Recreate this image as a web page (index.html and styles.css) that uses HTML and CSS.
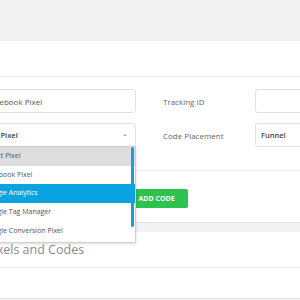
FILE: index.html
```html
<!DOCTYPE html>
<html lang="en">
<head>
  <meta charset="UTF-8">
  <title>Pixels and Codes</title>
  <link rel="stylesheet" href="styles.css">
</head>
<body>
  <div class="page">
    <div class="card">
      <div class="card-head"></div>
      <div class="card-body">
        <input type="text" class="field" value="Facebook Pixel">
        <label class="label">Tracking ID</label>
        <input type="text" class="field">

        <div class="select-wrap">
          <div class="field select">Select Pixel <span class="caret"></span></div>
          <div class="dropdown">
            <div class="option current">Select Pixel</div>
            <div class="option">Facebook Pixel</div>
            <div class="option hover">Google Analytics</div>
            <div class="option">Google Tag Manager</div>
            <div class="option">Google Conversion Pixel</div>
            <div class="scrollbar"></div>
          </div>
        </div>
        <label class="label">Code Placement</label>
        <div class="field select">Funnel</div>
      </div>
      <div class="card-foot">
        <button class="btn-add">ADD CODE</button>
      </div>
    </div>

    <div class="card second">
      <div class="card-head">
        <h3 class="title">Pixels and Codes</h3>
      </div>
      <div class="card-body empty"></div>
    </div>
  </div>
</body>
</html>
```

FILE: styles.css
```css
body {
  margin: 0;
  background: #f1f2f4;
  font-family: "Open Sans", sans-serif;
  overflow: hidden;
}
.page {
  padding-top: 41px;
  margin-left: -20px;
  width: 480px;
}
.card {
  background: #fff;
  border-bottom: 1px solid #e2e3e5;
}
.card.second {
  margin-top: 9px;
}
.card-head {
  height: 35px;
  border-bottom: 1px solid #eeeeee;
  display: flex;
  align-items: center;
}
.title {
  margin: 0 0 0 6px;
  font-size: 12.5px;
  font-weight: 400;
  color: #8a8a8a;
}
.card-body {
  display: grid;
  grid-template-columns: 155px 119px 160px;
  row-gap: 10px;
  align-items: center;
  padding: 12px 0 23px 1px;
}
.card-body.empty {
  height: 30px;
  padding: 0;
}
.field {
  box-sizing: border-box;
  height: 24px;
  border: 1px solid #e1e1e1;
  border-radius: 3px;
  padding: 0 5px;
  font-family: "Open Sans", sans-serif;
  font-size: 8px;
  color: #555;
  background: #fff;
  outline: none;
}
.select {
  display: flex;
  align-items: center;
  font-size: 7.5px;
  font-weight: 600;
  color: #444;
}
.label {
  padding-left: 27px;
  font-size: 8px;
  color: #666;
}
.select-wrap {
  position: relative;
  margin-left: -10px;
}
.caret {
  margin-left: auto;
  margin-right: 3px;
  border-left: 2px solid transparent;
  border-right: 2px solid transparent;
  border-bottom: 2px solid #aaa;
}
.dropdown {
  position: absolute;
  top: 23px;
  left: 0;
  width: 100%;
  box-sizing: border-box;
  background: #fff;
  border: 1px solid #cfcfcf;
  box-shadow: 0 1px 3px rgba(0, 0, 0, 0.15);
  padding-bottom: 2px;
  z-index: 5;
}
.option {
  height: 18.7px;
  line-height: 18.7px;
  padding-left: 12px;
  font-size: 7px;
  color: #555;
}
.option.current {
  background: #dddddd;
}
.option.hover {
  background: #0aa3e1;
  color: #fff;
}
.scrollbar {
  position: absolute;
  top: 0;
  right: 1px;
  width: 3px;
  height: 80px;
  border-radius: 2px;
  background: #1a9ee0;
}
.card-foot {
  border-top: 1px solid #eeeeee;
  padding: 13px 0 14px 144px;
}
.btn-add {
  width: 64px;
  height: 19px;
  border: none;
  border-radius: 2px;
  background: #2dc14e;
  color: #fff;
  font-family: "Open Sans", sans-serif;
  font-size: 7px;
  font-weight: 700;
  padding: 0 0 0 1px;
}
```
